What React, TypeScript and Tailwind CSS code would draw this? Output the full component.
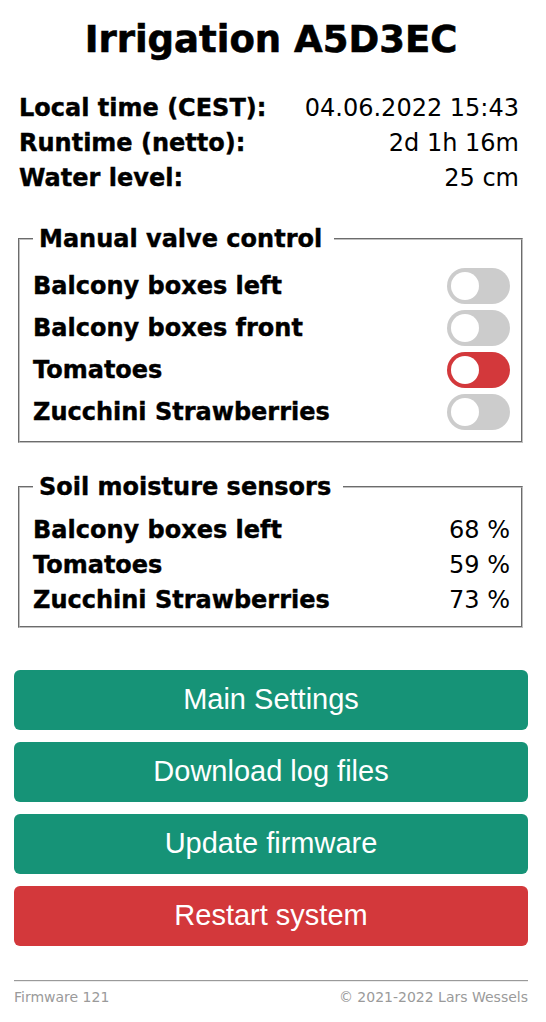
import React from 'react';

type Valve = { id: string; label: string; on: boolean };
type Sensor = { id: string; label: string; value: number };

const valves: Valve[] = [
  { id: 'v1', label: 'Balcony boxes left', on: false },
  { id: 'v2', label: 'Balcony boxes front', on: false },
  { id: 'v3', label: 'Tomatoes', on: true },
  { id: 'v4', label: 'Zucchini Strawberries', on: false },
];

const sensors: Sensor[] = [
  { id: 's1', label: 'Balcony boxes left', value: 68 },
  { id: 's2', label: 'Tomatoes', value: 59 },
  { id: 's3', label: 'Zucchini Strawberries', value: 73 },
];

const info = [
  { label: 'Local time (CEST):', value: '04.06.2022 15:43' },
  { label: 'Runtime (netto):', value: '2d 1h 16m' },
  { label: 'Water level:', value: '25 cm' },
];

function Toggle({ on }: { on: boolean }) {
  return <div className={`relative w-[63px] h-[36px] rounded-full ${on ? 'bg-[#d3383b]' : 'bg-[#cccccc]'}`}>
      <div className="absolute left-[4px] top-[4px] w-[28px] h-[28px] rounded-full bg-white" />
    </div>;
}

function Box({ title, children }: { title: string; children: React.ReactNode }) {
  return <fieldset className="ml-[4px] mr-[5px] border-2 [border-style:groove] border-[#c0c0c0] pl-[13px] pr-[11px]">
      <legend className="pl-[6px] pr-[12px] text-[24px] font-bold leading-[30px] [-webkit-text-stroke:0.4px]">{title}</legend>
      {children}
    </fieldset>;
}

export default function App() {
  return <div className="min-h-[1022px] bg-white text-black font-['DejaVu_Sans',sans-serif] pl-[14px] pr-[18px] pt-[18px]">
      <h1 className="text-center text-[37px] font-bold leading-[44px] [-webkit-text-stroke:0.6px]">Irrigation A5D3EC</h1>

      <div className="mt-[28px] ml-[5px] mr-[9px] text-[24px]">
        {info.map(row => <div key={row.label} className="flex justify-between items-center h-[35px]">
            <span className="font-bold [-webkit-text-stroke:0.4px]">{row.label}</span>
            <span>{row.value}</span>
          </div>)}
      </div>

      <div className="mt-[29px]">
        <Box title="Manual valve control">
          <div className="flex flex-col gap-[6px] pt-[14px] pb-[11px]">
            {valves.map(v => <div key={v.id} className="flex items-center justify-between h-[36px]">
                <span className="text-[24px] font-bold [-webkit-text-stroke:0.4px]">{v.label}</span>
                <Toggle on={v.on} />
              </div>)}
          </div>
        </Box>
      </div>

      <div className="mt-[29px]">
        <Box title="Soil moisture sensors">
          <div className="pt-[10px] pb-[9px]">
            {sensors.map(s => <div key={s.id} className="flex items-center justify-between h-[35px] text-[24px]">
                <span className="font-bold [-webkit-text-stroke:0.4px]">{s.label}</span>
                <span>{s.value} %</span>
              </div>)}
          </div>
        </Box>
      </div>

      <div className="mt-[42px] flex flex-col gap-[12px] font-['Liberation_Sans',Arial,sans-serif] text-white text-[29px]">
        <button className="h-[60px] rounded-[6px] bg-[#169377]">Main Settings</button>
        <button className="h-[60px] rounded-[6px] bg-[#169377]">Download log files</button>
        <button className="h-[60px] rounded-[6px] bg-[#169377]">Update firmware</button>
        <button className="h-[60px] rounded-[6px] bg-[#d3383b]">Restart system</button>
      </div>

      <div className="mt-[34px] h-[2px] border-t border-b border-t-[#9a9a9a] border-b-[#ececec]" />
      <div className="mt-[6px] flex justify-between text-[14px] leading-[18px] text-[#9a9a9a]">
        <span>Firmware 121</span>
        <span>© 2021-2022 Lars Wessels</span>
      </div>
    </div>;
}
